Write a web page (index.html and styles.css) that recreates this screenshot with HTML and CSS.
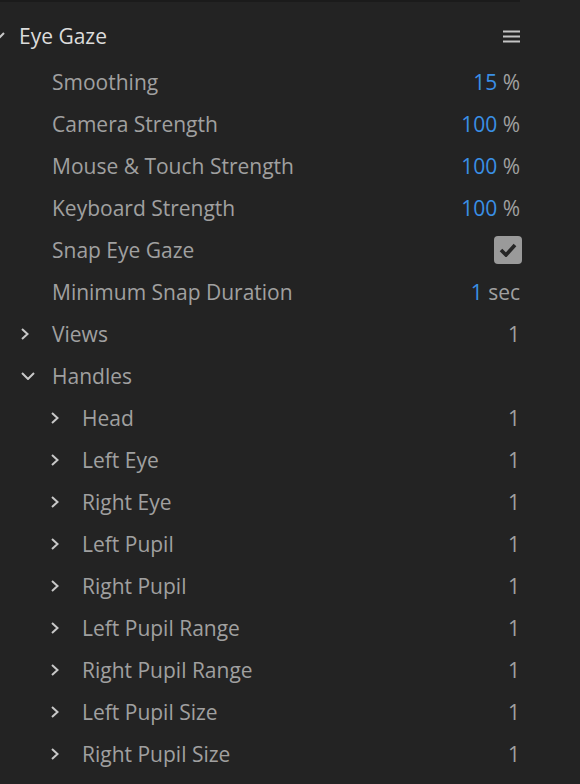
FILE: index.html
```html
<!DOCTYPE html>
<html>
<head>
<meta charset="utf-8">
<link rel="stylesheet" href="styles.css">
</head>
<body>
<div class="panel">
  <div class="topbar"></div>
  <div class="header">
    <span class="chev-down head-chev"><svg width="14" height="8" viewBox="0 0 14 8"><path d="M1 1 L7 7 L13 1" fill="none" stroke="#c8c8c8" stroke-width="2"/></svg></span>
    <span class="title">Eye Gaze</span>
    <span class="menu"><svg width="17" height="13" viewBox="0 0 17 13"><path d="M0 1.5H17M0 6.5H17M0 11.5H17" stroke="#c4c4c4" stroke-width="2"/></svg></span>
  </div>
  <div class="row l1"><span class="label">Smoothing</span><span class="value"><span class="num">15</span> %</span></div>
  <div class="row l1"><span class="label">Camera Strength</span><span class="value"><span class="num">100</span> %</span></div>
  <div class="row l1"><span class="label">Mouse &amp; Touch Strength</span><span class="value"><span class="num">100</span> %</span></div>
  <div class="row l1"><span class="label">Keyboard Strength</span><span class="value"><span class="num">100</span> %</span></div>
  <div class="row l1"><span class="label">Snap Eye Gaze</span><span class="check"><svg width="18" height="14" viewBox="0 0 18 14"><path d="M2 7 L7 12 L16 2" fill="none" stroke="#262626" stroke-width="3.6"/></svg></span></div>
  <div class="row l1"><span class="label">Minimum Snap Duration</span><span class="value"><span class="num">1</span> sec</span></div>
  <div class="row l1 tw"><span class="chev"><svg width="8" height="12" viewBox="0 0 8 12"><path d="M1 1 L6.5 6 L1 11" fill="none" stroke="#c8c8c8" stroke-width="2"/></svg></span><span class="label">Views</span><span class="value">1</span></div>
  <div class="row l1 tw"><span class="chev"><svg width="14" height="8" viewBox="0 0 14 8"><path d="M1 1 L7 7 L13 1" fill="none" stroke="#c8c8c8" stroke-width="2"/></svg></span><span class="label">Handles</span></div>
  <div class="row l2"><span class="chev"><svg width="8" height="12" viewBox="0 0 8 12"><path d="M1 1 L6.5 6 L1 11" fill="none" stroke="#c8c8c8" stroke-width="2"/></svg></span><span class="label">Head</span><span class="value">1</span></div>
  <div class="row l2"><span class="chev"><svg width="8" height="12" viewBox="0 0 8 12"><path d="M1 1 L6.5 6 L1 11" fill="none" stroke="#c8c8c8" stroke-width="2"/></svg></span><span class="label">Left Eye</span><span class="value">1</span></div>
  <div class="row l2"><span class="chev"><svg width="8" height="12" viewBox="0 0 8 12"><path d="M1 1 L6.5 6 L1 11" fill="none" stroke="#c8c8c8" stroke-width="2"/></svg></span><span class="label">Right Eye</span><span class="value">1</span></div>
  <div class="row l2"><span class="chev"><svg width="8" height="12" viewBox="0 0 8 12"><path d="M1 1 L6.5 6 L1 11" fill="none" stroke="#c8c8c8" stroke-width="2"/></svg></span><span class="label">Left Pupil</span><span class="value">1</span></div>
  <div class="row l2"><span class="chev"><svg width="8" height="12" viewBox="0 0 8 12"><path d="M1 1 L6.5 6 L1 11" fill="none" stroke="#c8c8c8" stroke-width="2"/></svg></span><span class="label">Right Pupil</span><span class="value">1</span></div>
  <div class="row l2"><span class="chev"><svg width="8" height="12" viewBox="0 0 8 12"><path d="M1 1 L6.5 6 L1 11" fill="none" stroke="#c8c8c8" stroke-width="2"/></svg></span><span class="label">Left Pupil Range</span><span class="value">1</span></div>
  <div class="row l2"><span class="chev"><svg width="8" height="12" viewBox="0 0 8 12"><path d="M1 1 L6.5 6 L1 11" fill="none" stroke="#c8c8c8" stroke-width="2"/></svg></span><span class="label">Right Pupil Range</span><span class="value">1</span></div>
  <div class="row l2"><span class="chev"><svg width="8" height="12" viewBox="0 0 8 12"><path d="M1 1 L6.5 6 L1 11" fill="none" stroke="#c8c8c8" stroke-width="2"/></svg></span><span class="label">Left Pupil Size</span><span class="value">1</span></div>
  <div class="row l2"><span class="chev"><svg width="8" height="12" viewBox="0 0 8 12"><path d="M1 1 L6.5 6 L1 11" fill="none" stroke="#c8c8c8" stroke-width="2"/></svg></span><span class="label">Right Pupil Size</span><span class="value">1</span></div>
</div>
</body>
</html>
```

FILE: styles.css
```css
html, body {
  margin: 0;
  padding: 0;
  background: #232323;
}
body {
  width: 580px;
  height: 784px;
  overflow: hidden;
  font-family: "Open Sans", "Noto Sans", sans-serif;
  font-size: 21px;
  color: #a0a0a0;
}
.panel {
  display: flex;
  flex-direction: column;
}
.topbar {
  height: 2px;
  width: 520px;
  background: #1b1b1b;
}
.header {
  height: 42px;
  margin-top: 13px;
  margin-bottom: 4px;
  display: flex;
  align-items: center;
  padding-right: 60px;
}
.head-chev {
  display: flex;
  margin-left: -9px;
  width: 28px;
}
.title {
  color: #dcdcdc;
  font-size: 21px;
  flex: 1;
}
.menu {
  display: flex;
}
.row {
  height: 42px;
  display: flex;
  align-items: center;
  padding-right: 60px;
}
.row.l1 {
  padding-left: 52px;
}
.row.l1.tw {
  padding-left: 21px;
}
.row.l1.tw .chev {
  width: 31px;
}
.row.l2 {
  padding-left: 51px;
}
.row.l2 .chev {
  width: 31px;
}
.chev {
  display: flex;
  align-items: center;
}
.label {
  flex: 1;
  white-space: nowrap;
}
.value {
  white-space: nowrap;
}
.num {
  color: #3a8fe6;
}
.check {
  width: 28px;
  height: 28px;
  border-radius: 4px;
  background: #9a9a9a;
  display: flex;
  align-items: center;
  justify-content: center;
  margin-right: -2px;
}
```
